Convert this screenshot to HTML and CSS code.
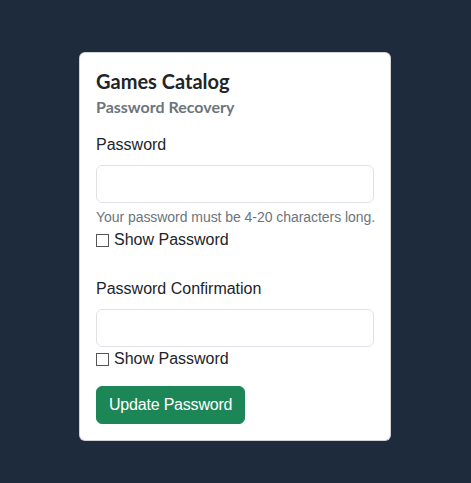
FILE: index.html
```html
<!DOCTYPE html>
<html lang="en">
<head>
<meta charset="utf-8">
<title>Games Catalog - Password Recovery</title>
<link rel="stylesheet" href="styles.css">
</head>
<body>
<main class="page">
  <form class="card">
    <h5 class="card-title">Games Catalog</h5>
    <h6 class="card-subtitle">Password Recovery</h6>

    <div class="field">
      <label class="form-label" for="pw">Password</label>
      <input class="form-control" id="pw" type="password">
      <div class="form-text">Your password must be 4-20 characters long.</div>
      <label class="check"><input type="checkbox" class="check-box"> Show Password</label>
    </div>

    <div class="field">
      <label class="form-label" for="pw2">Password Confirmation</label>
      <input class="form-control" id="pw2" type="password">
      <label class="check"><input type="checkbox" class="check-box"> Show Password</label>
    </div>

    <button type="button" class="btn">Update Password</button>
  </form>
</main>
</body>
</html>
```

FILE: styles.css
```css
html, body {
  margin: 0;
  padding: 0;
  background: #1e2b3c;
  font-family: "Liberation Sans", Arial, sans-serif;
  font-size: 16px;
  line-height: 1.5;
  color: #212529;
}

.page {
  display: flex;
  justify-content: center;
  padding-top: 52px;
  padding-right: 1px;
}

.card {
  width: 278px;
  padding: 16px;
  background: #fff;
  border: 1px solid rgba(0, 0, 0, 0.175);
  border-radius: 6px;
  display: flex;
  flex-direction: column;
}

.card-title {
  margin: 0 0 4px;
  font-family: Lato, "Liberation Sans", sans-serif;
  font-size: 20px;
  font-weight: 700;
  line-height: 1.2;
  color: #212529;
}

.card-subtitle {
  margin: 0 0 17px;
  font-family: Lato, "Liberation Sans", sans-serif;
  font-size: 16px;
  font-weight: 700;
  line-height: 1.2;
  color: #6c757d;
}

.field {
  display: flex;
  flex-direction: column;
  margin-bottom: 25px;
}

.field + .field {
  margin-bottom: 15px;
}

.form-label {
  margin-bottom: 8px;
}

.form-control {
  box-sizing: border-box;
  height: 38px;
  width: 100%;
  margin: 0;
  padding: 6px 12px;
  border: 1px solid #dee2e6;
  border-radius: 6px;
  font: inherit;
  background: #fff;
}

.form-text {
  margin-top: 4px;
  font-size: 14px;
  line-height: 1.5;
  color: #6c757d;
  white-space: nowrap;
  letter-spacing: -0.05px;
}

.check {
  display: flex;
  align-items: center;
  gap: 5px;
}

.check-box {
  appearance: none;
  -webkit-appearance: none;
  width: 13px;
  height: 13px;
  margin: 0;
  border: 1px solid #555;
  border-radius: 0;
  background: #fff;
  box-sizing: border-box;
}

.btn {
  align-self: flex-start;
  height: 38px;
  padding: 6px 12px;
  border: 1px solid #1d8657;
  border-radius: 6px;
  background: #1d8657;
  color: #fff;
  font: inherit;
  letter-spacing: -0.2px;
}
```
